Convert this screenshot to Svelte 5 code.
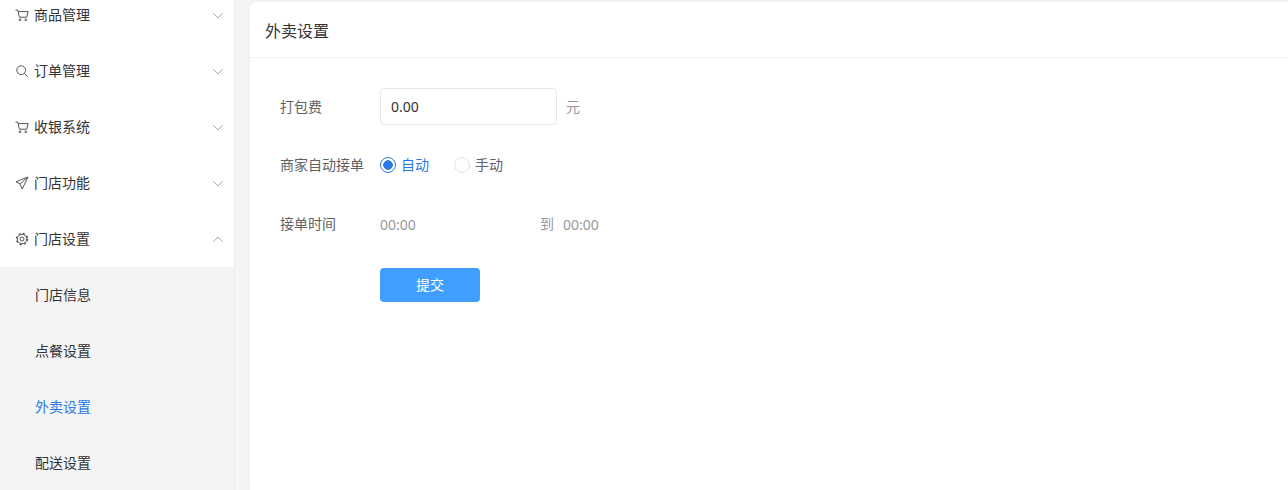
<script>
  const menus = [
    { name: '商品管理', icon: 'cart' },
    { name: '订单管理', icon: 'search' },
    { name: '收银系统', icon: 'cart' },
    { name: '门店功能', icon: 'send' },
    { name: '门店设置', icon: 'gear', open: true }
  ];
  const subs = [
    { name: '门店信息' },
    { name: '点餐设置' },
    { name: '外卖设置', active: true },
    { name: '配送设置' }
  ];
</script>

{#snippet icon(type)}
  <svg class="icon" viewBox="0 0 14 14" fill="none" stroke="#555" stroke-width="1">
    {#if type === 'cart'}
      <path d="M0.500 2h2.300l1.600 7.200h7.200l1.600-5.600H3.200" />
      <circle cx="5" cy="11.800" r="0.900" />
      <circle cx="10.800" cy="11.800" r="0.900" />
    {:else if type === 'search'}
      <circle cx="6.200" cy="6.200" r="4.400" />
      <path d="M9.400 9.400L12.800 12.800" />
    {:else if type === 'send'}
      <path d="M13 1L1 5.800l4 2.200 2.200 5z" />
      <path d="M13 1L5 8" />
    {:else}
      <circle cx="7" cy="7" r="4.700" />
      <circle cx="7" cy="7" r="5.600" stroke-width="1.200" stroke-dasharray="2.200 2.200" />
      <circle cx="7" cy="7" r="2" />
    {/if}
  </svg>
{/snippet}

<div class="page">
  <aside class="sidebar">
    {#each menus as m}
      <div class="menu">
        {@render icon(m.icon)}
        <span class="menu-name">{m.name}</span>
        <svg class="arrow" class:up={m.open} viewBox="0 0 12 7" fill="none" stroke="#aaa" stroke-width="1">
          <path d="M1 1l5 5 5-5" />
        </svg>
      </div>
    {/each}
    <div class="submenu">
      {#each subs as s}
        <div class="sub" class:active={s.active}>{s.name}</div>
      {/each}
    </div>
  </aside>

  <main class="main">
    <section class="card">
      <header class="card-head">外卖设置</header>
      <form class="form">
        <div class="row row-fee">
          <span class="label">打包费</span>
          <input class="input" value="0.00" />
          <span class="unit">元</span>
        </div>
        <div class="row row-radio">
          <span class="label">商家自动接单</span>
          <span class="radio checked"></span>
          <span class="radio-text on">自动</span>
          <span class="radio second"></span>
          <span class="radio-text">手动</span>
        </div>
        <div class="row row-time">
          <span class="label">接单时间</span>
          <span class="time first">00:00</span>
          <span class="to">到</span>
          <span class="time">00:00</span>
        </div>
        <div class="row row-btn">
          <button type="button" class="submit">提交</button>
        </div>
      </form>
    </section>
  </main>
</div>

<style>
  :global(body) {
    margin: 0;
    overflow: hidden;
    font-family: "Noto Sans CJK SC", "Liberation Sans", sans-serif;
  }
  .page {
    display: flex;
    height: 490px;
    overflow: hidden;
    background: #f5f5f5;
  }
  .sidebar {
    width: 234px;
    flex: none;
    margin-top: -13px;
    background: #fff;
    border-right: 1px solid #eeeeee;
    height: 503px;
    overflow: hidden;
  }
  .menu {
    display: flex;
    align-items: center;
    height: 56px;
    padding: 0 10px 0 15px;
    font-size: 14px;
    color: #333;
  }
  .icon {
    width: 14px;
    height: 14px;
    flex: none;
    margin-right: 5px;
  }
  .menu-name {
    flex: 1;
    margin-bottom: 2px;
  }
  .arrow {
    width: 12px;
    height: 7px;
    flex: none;
  }
  .arrow.up {
    transform: rotate(180deg);
  }
  .submenu {
    background: #f4f4f4;
  }
  .sub {
    box-sizing: border-box;
    display: flex;
    align-items: center;
    height: 56px;
    padding: 0 0 2px 35px;
    font-size: 14px;
    color: #333;
  }
  .sub.active {
    color: #2d78e6;
  }
  .main {
    flex: 1;
    padding: 2px 0 0 15px;
  }
  .card {
    height: 100%;
    background: #fff;
    border-radius: 6px 0 0 0;
    box-shadow: 0 0 4px rgba(0, 0, 0, 0.05);
  }
  .card-head {
    height: 55px;
    line-height: 56px;
    padding-left: 15px;
    font-size: 16px;
    color: #333;
    border-bottom: 1px solid #f2f2f2;
  }
  .form {
    padding: 30px 0 0 30px;
  }
  .row {
    display: flex;
    align-items: center;
    font-size: 14px;
  }
  .label {
    width: 100px;
    flex: none;
    margin-bottom: 2px;
    color: #606266;
  }
  .row-fee {
    height: 37px;
  }
  .input {
    box-sizing: border-box;
    width: 177px;
    height: 37px;
    padding: 0 10px;
    border: 1px solid #e4e7ed;
    border-radius: 4px;
    font: inherit;
    font-family: "Noto Sans", sans-serif;
    color: #333;
    outline: none;
  }
  .unit {
    margin-left: 9px;
    margin-bottom: 2px;
    color: #999;
  }
  .row-radio {
    height: 20px;
    margin-top: 30px;
  }
  .radio {
    box-sizing: border-box;
    width: 16px;
    height: 16px;
    border: 1px solid #dcdfe6;
    border-radius: 50%;
    flex: none;
  }
  .radio.checked {
    border-color: #2d78e6;
    background: radial-gradient(circle, #2d78e6 0 4.500px, #fff 5px);
  }
  .radio.second {
    margin-left: 25px;
  }
  .radio-text {
    margin-left: 5px;
    margin-bottom: 2px;
    color: #606266;
  }
  .radio-text.on {
    color: #2d78e6;
  }
  .row-time {
    height: 20px;
    margin-top: 39px;
  }
  .time {
    font-family: "Noto Sans", sans-serif;
    color: #999;
  }
  .time.first {
    width: 160px;
  }
  .to {
    margin-right: 9px;
    margin-bottom: 2px;
    font-size: 14px;
    color: #999;
  }
  .row-btn {
    margin-top: 34px;
    padding-left: 100px;
  }
  .submit {
    width: 100px;
    height: 34px;
    padding: 0 0 2px;
    border: none;
    border-radius: 4px;
    background: #409eff;
    color: #fff;
    font: inherit;
  }
</style>
